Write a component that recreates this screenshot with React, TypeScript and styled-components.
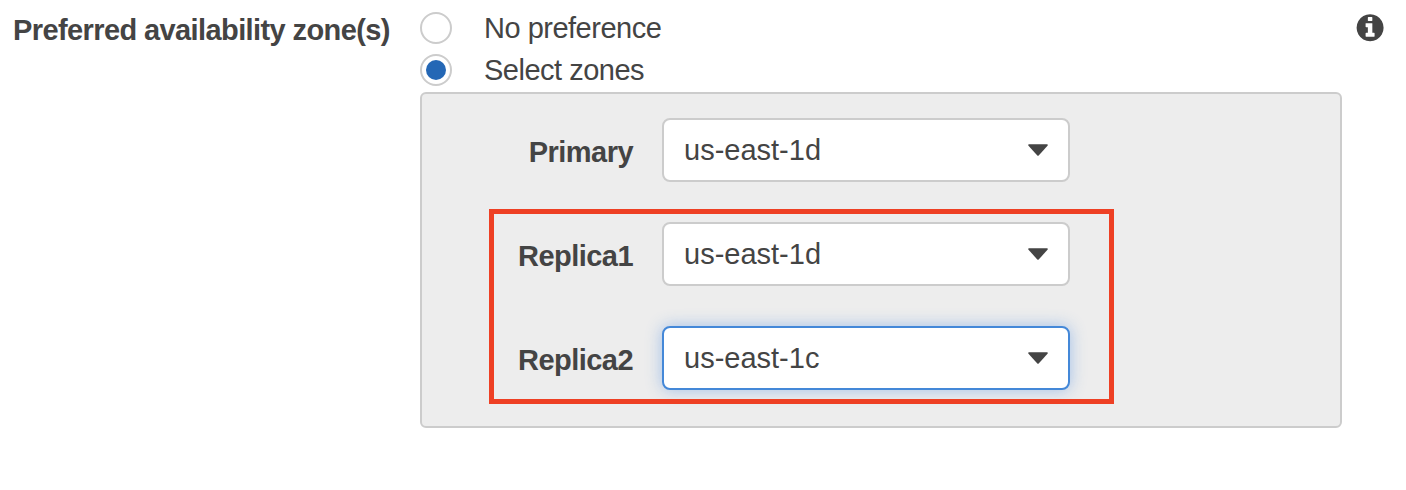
import React from "react";
import styled, { createGlobalStyle } from "styled-components";

const GlobalStyle = createGlobalStyle`
  *, *::before, *::after { box-sizing: border-box; }
  body {
    margin: 0;
    background: #fff;
    color: #444;
    font: 29px/32px "Liberation Sans", Arial, sans-serif;
    white-space: nowrap;
  }
`;

const Field = styled.section`
  display: grid;
  grid-template-columns: 420px 922px 1fr;
  width: 1406px;
  height: 490px;
`;

const FieldLabel = styled.div`
  padding: 14px 0 0 13px;
  font-weight: bold;
  letter-spacing: -0.6px;
`;

const Controls = styled.div`
  padding-top: 12px;
`;

const Option = styled.label`
  display: flex;
  align-items: center;
  gap: 32px;
  height: 32px;
  margin-bottom: 10px;
`;

const Radio = styled.span`
  display: flex;
  align-items: center;
  justify-content: center;
  width: 32px;
  height: 32px;
  border: 2px solid #ccc;
  border-radius: 50%;
  background: #fff;
`;

const RadioDot = styled.span`
  width: 20px;
  height: 20px;
  border-radius: 50%;
  background: #2467b5;
`;

const OptionText = styled.span`
  letter-spacing: -0.5px;
`;

const Panel = styled.div`
  position: relative;
  display: flex;
  flex-direction: column;
  gap: 40px;
  height: 336px;
  margin-top: -4px;
  padding-top: 24px;
  border: 2px solid #ccc;
  border-radius: 6px;
  background: #ededed;
`;

const ZoneRow = styled.div`
  display: grid;
  grid-template-columns: 212px 408px;
  column-gap: 28px;
  height: 64px;
`;

const ZoneLabel = styled.div`
  padding: 18px 1px 0 0;
  font-weight: bold;
  text-align: right;
  letter-spacing: -0.55px;
`;

const Select = styled.div<{ $focused: boolean }>`
  display: flex;
  align-items: center;
  justify-content: space-between;
  height: 64px;
  padding: 0 20px;
  border: 2px solid ${(p) => (p.$focused ? "#4488d8" : "#ccc")};
  border-radius: 8px;
  background: #fff;
  box-shadow: ${(p) => (p.$focused ? "0 0 16px rgba(68, 136, 226, 0.45)" : "none")};
`;

const Highlight = styled.div`
  position: absolute;
  left: 67px;
  top: 115px;
  width: 625px;
  height: 195px;
  border: 5px solid #ee4024;
  pointer-events: none;
`;

const Help = styled.div`
  padding: 14px 0 0 14px;

  svg { display: block; }
`;

const Caret = () => (
  <svg width="20" height="12" viewBox="0 0 20 12" fill="#444">
    <path d="M1 .3H19Q20.300 .8 19.500 1.800L10.700 11.400Q10 12 9.300 11.400L.5 1.800Q-.3 .8 1 .3Z" />
  </svg>
);

const InfoIcon = () => (
  <svg width="28" height="28" viewBox="94 117 1593 1593" fill="#444">
    <path d="M1152 1376v-160q0-14-9-23t-23-9h-96v-512q0-14-9-23t-23-9h-320q-14 0-23 9t-9 23v160q0 14 9 23t23 9h96v320h-96q-14 0-23 9t-9 23v160q0 14 9 23t23 9h448q14 0 23-9t9-23zm-128-896v-160q0-14-9-23t-23-9h-192q-14 0-23 9t-9 23v160q0 14 9 23t23 9h192q14 0 23-9t9-23zm640 416q0 209-103 385.500t-279.500 279.500-385.500 103-385.500-103-279.500-279.500-103-385.500 103-385.500 279.500-279.500 385.500-103 385.500 103 279.500 279.500 103 385.500z" />
  </svg>
);

const zones = [
  { label: "Primary", value: "us-east-1d", focused: false },
  { label: "Replica1", value: "us-east-1d", focused: false },
  { label: "Replica2", value: "us-east-1c", focused: true },
];

export default function App() {
  return (
    <>
      <GlobalStyle />
      <Field>
        <FieldLabel>Preferred availability zone(s)</FieldLabel>
        <Controls>
          <Option>
            <Radio />
            <OptionText>No preference</OptionText>
          </Option>
          <Option>
            <Radio>
              <RadioDot />
            </Radio>
            <OptionText>Select zones</OptionText>
          </Option>
          <Panel>
            {zones.map((z) => (
              <ZoneRow key={z.label}>
                <ZoneLabel>{z.label}</ZoneLabel>
                <Select $focused={z.focused}>
                  <span>{z.value}</span>
                  <Caret />
                </Select>
              </ZoneRow>
            ))}
            <Highlight />
          </Panel>
        </Controls>
        <Help>
          <InfoIcon />
        </Help>
      </Field>
    </>
  );
}
